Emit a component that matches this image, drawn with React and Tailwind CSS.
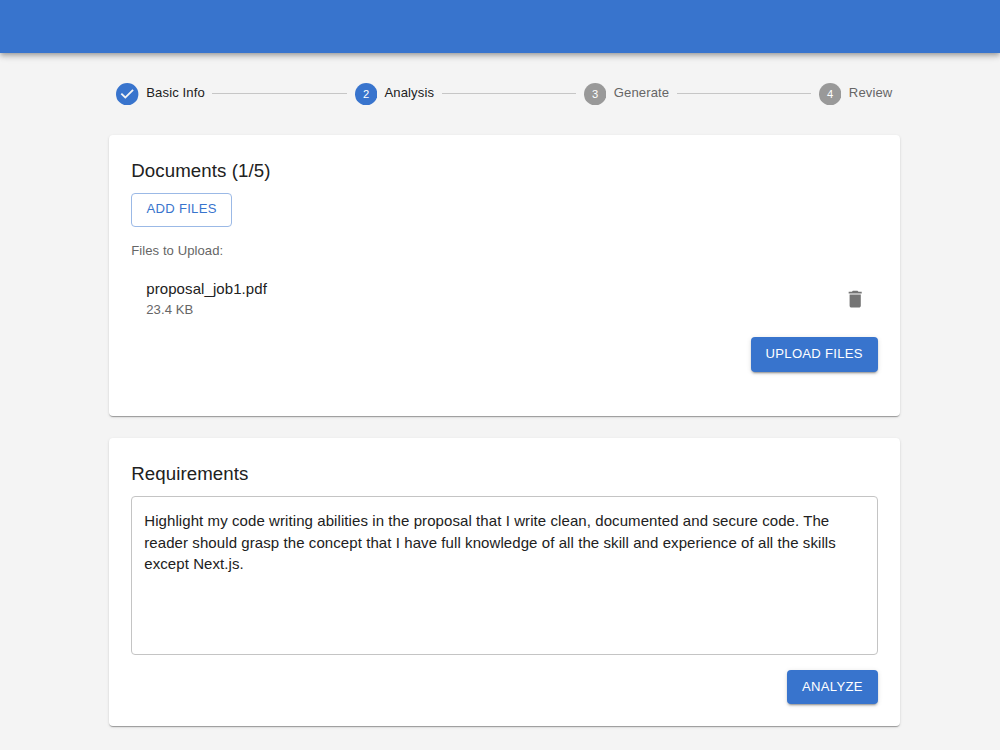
import { Fragment } from 'react';
import clsx from 'clsx';

const steps = [
  { label: 'Basic Info', status: 'done' },
  { label: 'Analysis', status: 'active' },
  { label: 'Generate', status: 'pending' },
  { label: 'Review', status: 'pending' },
];

const files = [{ name: 'proposal_job1.pdf', size: '23.4 KB' }];

const requirements =
  'Highlight my code writing abilities in the proposal that I write clean, documented and secure code. The reader should grasp the concept that I have full knowledge of all the skill and experience of all the skills except Next.js.';

function StepIcon({ number, status }) {
  return (
    <svg
      viewBox="0 0 24 24"
      className={clsx('size-[22.4px] shrink-0', status === 'pending' ? 'text-[#999999]' : 'text-[#3874cd]')}
      fill="currentColor"
    >
      {status === 'done' ? (
        <path d="M12 0a12 12 0 1 0 0 24 12 12 0 0 0 0-24zm-2 17l-5-5 1.4-1.4 3.6 3.6 7.6-7.6L19 8l-9 9z" />
      ) : (
        <>
          <circle cx="12" cy="12" r="12" />
          <text x="12" y="11.5" textAnchor="middle" dominantBaseline="central" className="fill-white text-[12px]">
            {number}
          </text>
        </>
      )}
    </svg>
  );
}

function Stepper() {
  return (
    <div className="flex items-center">
      {steps.map((step, i) => (
        <Fragment key={step.label}>
          {i > 0 && <div className="h-px flex-1 bg-[#c6c6c6]" />}
          <div className="flex items-center px-[7.5px]">
            <StepIcon number={i + 1} status={step.status} />
            <span
              className={clsx(
                'ml-[7.5px] -mt-0.5 text-[13.1px] leading-[19px] tracking-[0.1px]',
                step.status === 'pending' ? 'text-[#666666]' : 'text-[#212121]'
              )}
            >
              {step.label}
            </span>
          </div>
        </Fragment>
      ))}
    </div>
  );
}

function Card({ title, className, children }) {
  return (
    <section
      className={clsx(
        'flex flex-col rounded-[4px] bg-white pl-[22.4px] pr-[22.2px] pt-[21px] shadow-[0_2px_1px_-1px_rgba(0,0,0,0.2),0_1px_1px_0_rgba(0,0,0,0.14),0_1px_3px_0_rgba(0,0,0,0.12)]',
        className
      )}
    >
      <h2 className="text-[18.7px] font-normal leading-[29px] tracking-[0.07px]">{title}</h2>
      {children}
    </section>
  );
}

function PrimaryButton({ children }) {
  return (
    <button className="h-[34.4px] self-end rounded-[4px] bg-[#3874cd] px-[15px] pb-px text-[13.1px] uppercase leading-[22px] tracking-[0.27px] text-white shadow-[0_3px_1px_-2px_rgba(0,0,0,0.2),0_2px_2px_0_rgba(0,0,0,0.14),0_1px_5px_0_rgba(0,0,0,0.12)]">
      {children}
    </button>
  );
}

export default function App() {
  return (
    <div className="min-h-screen bg-[#f4f4f4] font-['Liberation_Sans',Arial,sans-serif] text-[#212121]">
      <header className="h-[53px] bg-[#3874cd] shadow-[0_2px_4px_-1px_rgba(0,0,0,0.2),0_4px_5px_0_rgba(0,0,0,0.14),0_1px_10px_0_rgba(0,0,0,0.12)]" />

      <main className="ml-[108.9px] w-[791px] pt-[29.5px]">
        <Stepper />

        <Card title="Documents (1/5)" className="mt-[30.1px] h-[281px]">
          <button className="mt-2 h-[34px] self-start rounded-[4px] border border-[#9bb9e6] px-[14.3px] pb-px text-[13.1px] uppercase leading-[22px] tracking-[0.27px] text-[#3874cd]">
            Add Files
          </button>
          <p className="mt-[14px] text-[13.1px] leading-[19px] tracking-[0.06px] text-[#666666]">Files to Upload:</p>

          <ul className="mt-[18px]">
            {files.map((file) => (
              <li key={file.name} className="flex items-center justify-between pl-[15px] pr-[11.4px]">
                <div>
                  <p className="text-[15px] leading-[22px] tracking-[0.08px]">{file.name}</p>
                  <p className="text-[13.1px] leading-[19px] tracking-[0.06px] text-[#666666]">{file.size}</p>
                </div>
                <button aria-label="Delete file" className="mt-[1.5px]">
                  <svg viewBox="0 0 24 24" className="size-[22.4px] fill-[#757575]">
                    <path d="M6 19c0 1.1.9 2 2 2h8c1.1 0 2-.9 2-2V7H6zM19 4h-3.5l-1-1h-5l-1 1H5v2h14z" />
                  </svg>
                </button>
              </li>
            ))}
          </ul>

          <div className="mt-[18.5px] flex justify-end">
            <PrimaryButton>Upload Files</PrimaryButton>
          </div>
        </Card>

        <Card title="Requirements" className="mt-[22px] h-[288px]">
          <textarea
            readOnly
            className="mt-[8.5px] h-[159px] w-full shrink-0 resize-none rounded-[4px] border border-[#c4c4c4] px-3 pt-[13px] text-[15px] leading-[21.5px] tracking-[0.08px] outline-none"
            value={requirements}
          />
          <div className="mt-[14.5px] flex justify-end">
            <PrimaryButton>Analyze</PrimaryButton>
          </div>
        </Card>
      </main>
    </div>
  );
}
